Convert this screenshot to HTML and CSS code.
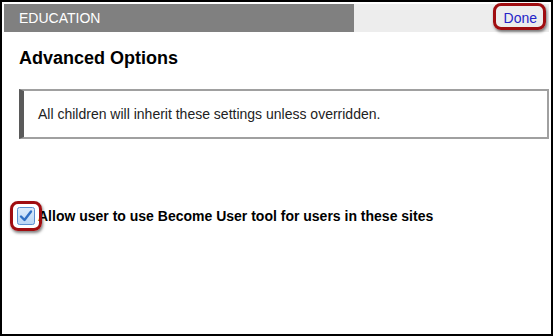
FILE: index.html
```html
<!DOCTYPE html>
<html>
<head>
<meta charset="utf-8">
<link rel="stylesheet" href="styles.css">
</head>
<body>
<div class="frame">
  <div class="header">
    <div class="title">EDUCATION</div>
    <div class="actions">
      <a class="done" href="#">Done<span class="mark"></span></a>
    </div>
  </div>
  <div class="content">
    <h2 class="heading">Advanced Options</h2>
    <div class="notice">All children will inherit these settings unless overridden.</div>
    <label class="option">
      <span class="check">
        <svg width="18" height="18" viewBox="0 0 18 18">
          <defs>
            <linearGradient id="g" x1="0" y1="0" x2="0" y2="1">
              <stop offset="0" stop-color="#dcecfc"/>
              <stop offset="1" stop-color="#b9d6f5"/>
            </linearGradient>
          </defs>
          <rect x="0.5" y="0.5" width="17" height="17" rx="2" fill="url(#g)" stroke="#5b8fd0"/>
          <path d="M4 9.5 L7.5 13 L14 4.5" fill="none" stroke="#2e6fc4" stroke-width="2.4" stroke-linecap="round" stroke-linejoin="round"/>
        </svg>
        <span class="mark"></span>
      </span>
      <span class="label">Allow user to use Become User tool for users in these sites</span>
    </label>
  </div>
</div>
</body>
</html>
```

FILE: styles.css
```css
html, body {
  margin: 0;
  padding: 0;
  background: #fff;
}
.frame {
  box-sizing: border-box;
  width: 553px;
  height: 336px;
  border: 2px solid #000;
  padding: 2px;
  font-family: "Liberation Sans", Arial, sans-serif;
  position: relative;
}
.header {
  display: flex;
  height: 28px;
  background: #ededed;
}
.title {
  width: 350px;
  background: #808080;
  color: #fff;
  font-size: 14px;
  line-height: 28px;
  padding-left: 15px;
  box-sizing: border-box;
}
.actions {
  flex: 1;
  display: flex;
  justify-content: flex-end;
  align-items: center;
  padding-right: 12px;
}
.done {
  position: relative;
  color: #2424c8;
  text-decoration: none;
  font-size: 14px;
  line-height: 16px;
}
.done .mark {
  position: absolute;
  left: -11px;
  top: -7px;
  width: 47px;
  height: 21px;
  border: 3px solid #a00d10;
  border-radius: 8px;
  box-shadow: 1px 2px 3px rgba(0,0,0,0.5);
}
.content {
  padding: 0 0 0 15px;
}
.heading {
  margin: 15px 0 0 0;
  font-size: 18px;
  font-weight: bold;
  line-height: 22px;
  color: #000;
}
.notice {
  margin-top: 20px;
  height: 50px;
  box-sizing: border-box;
  border: 2px solid #a0a0a0;
  border-left: 5px solid #5a5a5a;
  font-size: 14px;
  color: #222;
  display: flex;
  align-items: center;
  padding-left: 14px;
}
.option {
  margin-top: 68px;
  display: flex;
  align-items: center;
}
.check {
  position: relative;
  width: 18px;
  height: 18px;
  margin-left: -2px;
  margin-right: 3px;
}
.check svg {
  display: block;
}
.check .mark {
  position: absolute;
  left: -7px;
  top: -6px;
  width: 26px;
  height: 24px;
  border: 3px solid #a00d10;
  border-radius: 8px;
  box-shadow: 1px 2px 3px rgba(0,0,0,0.5);
}
.label {
  font-size: 14px;
  font-weight: bold;
  color: #000;
}
```
